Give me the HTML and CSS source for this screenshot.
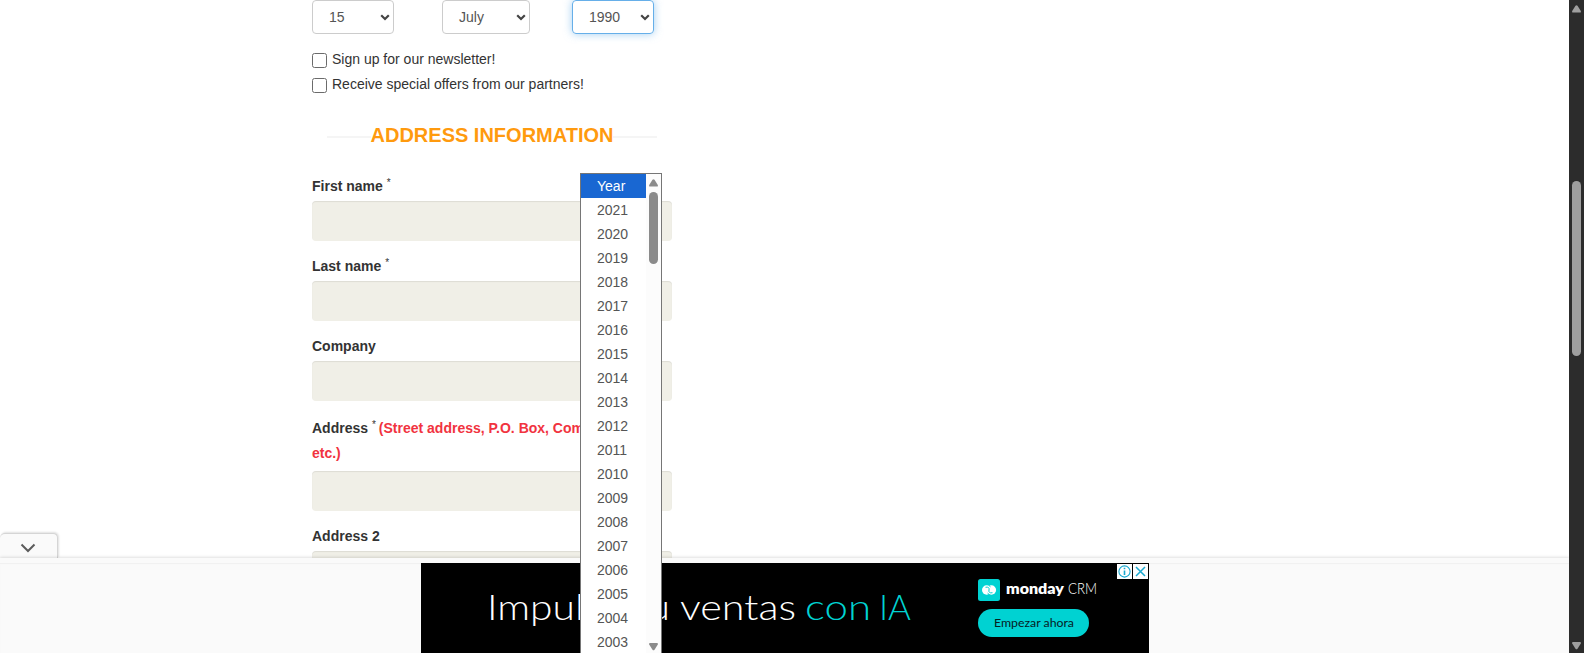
FILE: index.html
```html
<!DOCTYPE html>
<html lang="en">
<head>
<meta charset="utf-8">
<title>Address information</title>
<link rel="stylesheet" href="styles.css">
</head>
<body>
<div class="page">
  <main class="form">
    <div class="dates">
      <div class="select">15<svg class="caret" viewBox="0 0 10 7"><path d="M1.200 1.200 5 5l3.800-3.800"/></svg></div>
      <div class="select month">July<svg class="caret" viewBox="0 0 10 7"><path d="M1.200 1.200 5 5l3.800-3.800"/></svg></div>
      <div class="select focused">1990<svg class="caret" viewBox="0 0 10 7"><path d="M1.200 1.200 5 5l3.800-3.800"/></svg></div>
    </div>
    <div class="check"><span class="box"></span><span>Sign up for our newsletter!</span></div>
    <div class="check"><span class="box"></span><span>Receive special offers from our partners!</span></div>
    <h3 class="heading"><span>ADDRESS INFORMATION</span></h3>
    <div class="field"><label>First name <sup>*</sup></label><div class="input"></div></div>
    <div class="field"><label>Last name <sup>*</sup></label><div class="input"></div></div>
    <div class="field"><label>Company</label><div class="input"></div></div>
    <div class="field address"><label>Address <sup>*</sup><span class="hint">(Street address, P.O. Box, Company name, etc.)</span></label><div class="input"></div></div>
    <div class="field"><label>Address 2</label><div class="input"></div></div>
  </main>

  <div class="dock">
    <div class="tab"><svg width="16" height="10" viewBox="0 0 16 10"><path d="M1.500 1.500 8 8l6.500-6.500"/></svg></div>
    <div class="strip"></div>
    <div class="tray">
      <div class="ad">
        <svg class="slogan" width="440" height="90" viewBox="0 0 440 90">
          <text x="66" y="57" textLength="134" lengthAdjust="spacingAndGlyphs">Impulsa</text>
          <text x="212" y="57" textLength="37" lengthAdjust="spacingAndGlyphs">tu</text>
          <text x="259" y="57" textLength="116" lengthAdjust="spacingAndGlyphs">ventas</text>
          <text class="cyan" x="384" y="57" textLength="66" lengthAdjust="spacingAndGlyphs">con</text>
          <text class="cyan" x="458" y="57" textLength="32" lengthAdjust="spacingAndGlyphs">IA</text>
        </svg>
        <div class="brand">
          <div class="logo-row">
            <svg class="logo" width="22" height="22" viewBox="0 0 22 22"><rect width="22" height="22" rx="2.500" fill="#00d2d2"/><circle cx="8.700" cy="11" r="4.700" fill="#fff"/><circle cx="13.400" cy="11" r="4.700" fill="#fff"/><path d="M7.500 8.300c2.700-.8 4.200.8 3.500 2.700-.7 1.900.8 3.500 3.500 2.700M10.700 6.300l1.800 1.500M11.400 15.700l-1.800-1.500" fill="none" stroke="#00d2d2" stroke-width="1"/></svg>
            <svg width="94" height="22" viewBox="0 0 94 22"><text class="bold" x="0" y="14.500" textLength="58" lengthAdjust="spacingAndGlyphs">monday</text><text class="thin" x="62" y="14.500" textLength="29" lengthAdjust="spacingAndGlyphs">CRM</text></svg>
          </div>
          <div class="cta"><svg width="82" height="20" viewBox="0 0 82 20"><text x="1" y="13.500" textLength="80" lengthAdjust="spacingAndGlyphs">Empezar ahora</text></svg></div>
        </div>
        <div class="adchoices">
          <svg width="15" height="15" viewBox="0 0 15 15"><circle cx="7.500" cy="7.500" r="5.600"/><path d="M7.500 6.500v4.500M7.500 3.800v1.400" stroke-width="1.600"/></svg>
          <svg width="15" height="15" viewBox="0 0 15 15"><path d="M3 3l9 9M12 3l-9 9" stroke-width="1.500"/></svg>
        </div>
      </div>
    </div>
  </div>

  <div class="options">
    <div class="list">
      <div class="on">Year</div><div>2021</div><div>2020</div><div>2019</div><div>2018</div><div>2017</div><div>2016</div><div>2015</div><div>2014</div><div>2013</div><div>2012</div><div>2011</div><div>2010</div><div>2009</div><div>2008</div><div>2007</div><div>2006</div><div>2005</div><div>2004</div><div>2003</div>
    </div>
    <div class="bar light">
      <svg width="9" height="8" viewBox="0 0 9 8"><path d="M3.500.8Q4.500-.4 5.500.8L8.800 6Q9.200 7.500 8 7.500H1Q-.2 7.500.2 6Z"/></svg>
      <div class="thumb"></div>
      <svg class="down" width="9" height="8" viewBox="0 0 9 8"><path d="M3.500 6.700Q4.500 7.900 5.500 6.700L8.800 1.500Q9.200 0 8 0H1Q-.2 0 .2 1.500Z"/></svg>
    </div>
  </div>
</div>
<div class="bar dark">
  <svg width="9" height="8" viewBox="0 0 9 8"><path d="M3.500.8Q4.500-.4 5.500.8L8.800 6Q9.200 7.500 8 7.500H1Q-.2 7.500.2 6Z"/></svg>
  <div class="thumb"></div>
  <svg class="down" width="9" height="8" viewBox="0 0 9 8"><path d="M3.500 6.700Q4.500 7.900 5.500 6.700L8.800 1.500Q9.200 0 8 0H1Q-.2 0 .2 1.500Z"/></svg>
</div>
</body>
</html>
```

FILE: styles.css
```css
* { box-sizing: border-box; }
body {
  margin: 0;
  height: 653px;
  display: flex;
  overflow: hidden;
  background: #fff;
  color: #333;
  font: 14px/25px Arial, "Liberation Sans", sans-serif;
}
svg { display: block; }
.page { position: relative; flex: 1; height: 653px; overflow: hidden; }
.form { width: 360px; margin-left: 312px; }

.dates { display: flex; height: 34px; margin-bottom: 14px; }
.select {
  width: 82px;
  height: 34px;
  padding: 0 3px 0 16px;
  display: flex;
  align-items: center;
  justify-content: space-between;
  border: 1px solid #ccc;
  border-radius: 4px;
  color: #555;
}
.select.month { width: 88px; margin: 0 42px 0 48px; }
.select.focused { border-color: #66afe9; box-shadow: 0 0 8px rgba(102, 175, 233, .6); }
.caret { width: 10px; height: 7px; fill: none; stroke: #444; stroke-width: 2.2; }

.check { display: flex; gap: 5px; height: 25px; line-height: 22px; }
.box { width: 15px; height: 15px; margin-top: 5px; border: 1px solid #6b6b6b; border-radius: 2.5px; }

.heading {
  display: flex;
  align-items: center;
  justify-content: center;
  width: 330px;
  height: 30px;
  margin: 22px 0 0 15px;
  color: #ff9a0e;
  font-size: 20px;
  line-height: 30px;
}
.heading::before, .heading::after { content: ""; flex: 1; height: 2px; margin-top: 3px; background: #f5f5f5; }

.field { margin-bottom: 13px; }
.heading + .field { margin-top: 24px; }
.field label { display: block; height: 27px; font-weight: bold; }
.field sup { font-size: 10px; font-weight: normal; line-height: 0; vertical-align: 5px; }
.field .hint { color: #f13340; margin-left: 3px; }
.input {
  height: 40px;
  border-radius: 4px;
  background: #f0efe7;
  box-shadow: inset 0 1px 1px rgba(0, 0, 0, .08);
}
.address label { height: 57px; padding-top: 2px; }

.dock { position: absolute; left: 0; right: 0; bottom: 0; height: 120px; }
.tab {
  display: flex;
  align-items: center;
  justify-content: center;
  width: 58px;
  height: 25px;
  padding: 3px 2px 0 0;
  border: 1px solid #d5d5d5;
  border-width: 1px 1px 0 0;
  border-radius: 5px 5px 0 0;
  background: #fafafa;
  box-shadow: 1px -1px 2px rgba(0, 0, 0, .12);
}
.tab svg { fill: none; stroke: #5c5c5c; stroke-width: 2; }
.strip { height: 5px; background: #fafafa; box-shadow: 0 -1px 3px rgba(0, 0, 0, .12); }
.tray { display: flex; height: 90px; padding-left: 421px; background: #fafafa; box-shadow: inset 0 1px 1px rgba(0, 0, 0, .04); }
.ad { display: flex; width: 728px; height: 90px; background: #000; }
.slogan { overflow: visible; font: 300 35px Lato, sans-serif; fill: #fff; }
.slogan .cyan { fill: #00d2d2; }
.brand { width: 150px; margin-left: 117px; padding-top: 16px; }
.logo-row { display: flex; gap: 6px; height: 30px; }
.logo-row text { fill: #fff; font-family: Lato, sans-serif; font-size: 15px; }
.logo-row .bold { font-weight: 800; }
.logo-row .thin { font-weight: 300; }
.cta { display: flex; align-items: center; justify-content: center; width: 111px; height: 28px; border-radius: 14px; background: #00d2d2; }
.cta text { font: 11.5px Lato, sans-serif; fill: #06201f; }
.adchoices { display: flex; gap: 1px; margin: 1px 0 0 -11px; }
.adchoices svg { flex: none; background: #fff; fill: none; stroke: #19a9d0; stroke-width: 1.1; }

.options {
  position: absolute;
  left: 580px;
  top: 173px;
  display: flex;
  width: 82px;
  height: 482px;
  border: 1px solid #767676;
  background: #fff;
}
.list { width: 65px; color: #555; line-height: 24px; }
.list div { height: 24px; padding-left: 16px; }
.list .on { background: #1967d2; color: #fff; }

.bar { display: flex; flex-direction: column; align-items: center; width: 15px; flex: none; }
.bar .thumb { width: 9px; border-radius: 5px; }
.bar .down { margin-top: auto; }
.light { background: #fcfcfc; padding: 5px 0 3px; fill: #8b8b8b; }
.light .thumb { height: 72px; margin-top: 5px; background: #8b8b8b; }
.dark { height: 653px; background: #2c2c2c; padding: 5px 0 3px; fill: #9f9f9f; }
.dark .thumb { height: 175px; margin-top: 168px; background: #9f9f9f; }
```
